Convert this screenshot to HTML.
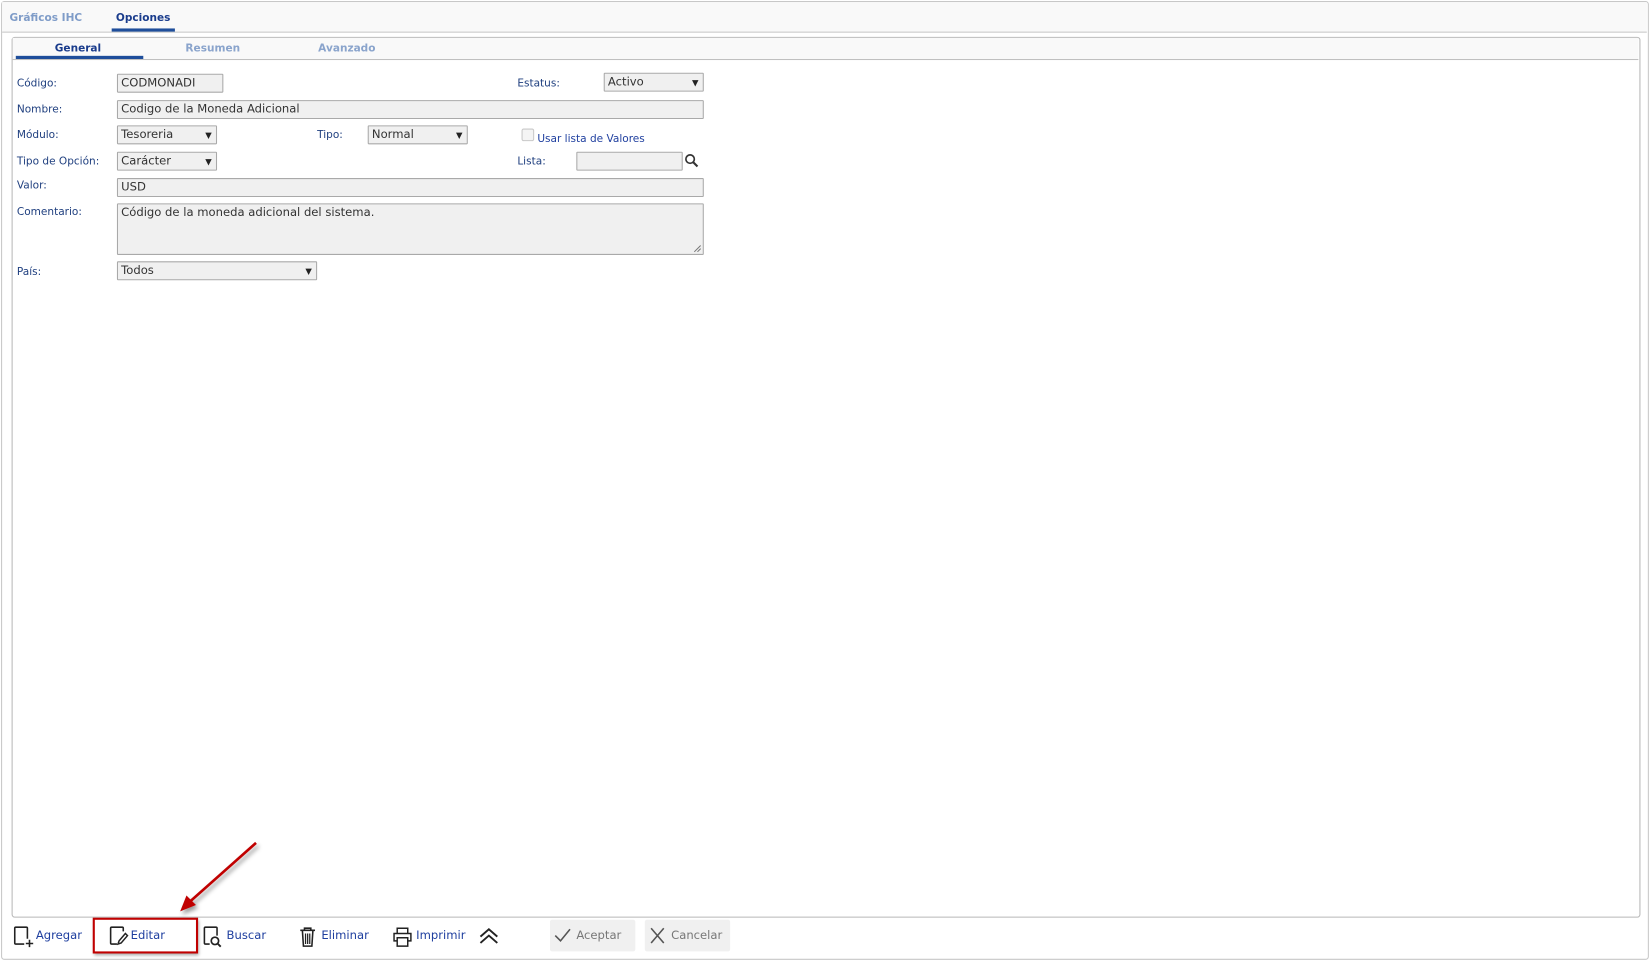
<!DOCTYPE html>
<html><head><meta charset="utf-8"><style>
html,body{margin:0;padding:0;width:1650px;height:960px;overflow:hidden;background:#fff;}
#w{position:absolute;left:0;top:0;width:1566px;height:911px;transform:scale(1.0536);transform-origin:0 0;font-family:"DejaVu Sans","Liberation Sans",sans-serif;}
.a{position:absolute;}
.lbl{position:absolute;font-size:10px;color:#1f3f7f;line-height:12px;margin-top:2px;}
.in{position:absolute;background:#f0f0f0;border:1px solid #a9a9a9;box-sizing:border-box;font-size:11px;color:#333;line-height:15px;padding-left:3px;border-radius:1px;}
.sel:after{content:"▼";position:absolute;right:4px;top:1px;font-size:8px;color:#222;}
.tb{position:absolute;font-size:11px;color:#1f3f9f;line-height:14px;top:881px;}
</style></head><body><div id="w">
<div class="a" style="left:1px;top:1px;width:1562px;height:908px;border:1px solid #c8c8c8;border-radius:3px;"></div>
<div class="a" style="left:2px;top:2px;width:1561px;height:28px;background:#f9f9f9;border-bottom:1px solid #c8c8c8;"></div>
<div class="a" style="left:9px;top:12px;font-size:10px;font-weight:bold;color:#7f9cc8;">Gráficos IHC</div>
<div class="a" style="left:110px;top:12px;font-size:10px;font-weight:bold;color:#1a3c8c;">Opciones</div>
<div class="a" style="left:106px;top:27px;width:60px;height:3px;background:#1f4e9b;"></div>

<div class="a" style="left:11px;top:35px;width:1544px;height:834px;border:1px solid #b8b8b8;border-radius:3px;"></div>
<div class="a" style="left:12px;top:36px;width:1543px;height:20px;background:#f9f9f9;border-bottom:1px solid #c0c0c0;"></div>
<div class="a" style="left:52px;top:41px;font-size:10px;font-weight:bold;color:#1a3c8c;">General</div>
<div class="a" style="left:176px;top:41px;font-size:10px;font-weight:bold;color:#8aa4cc;">Resumen</div>
<div class="a" style="left:302px;top:41px;font-size:10px;font-weight:bold;color:#8aa4cc;">Avanzado</div>
<div class="a" style="left:15px;top:53px;width:121px;height:3px;background:#1f4e9b;"></div>

<div class="lbl" style="left:16px;top:72px;">Código:</div>
<div class="in" style="left:111px;top:70px;width:101px;height:18px;">CODMONADI</div>
<div class="lbl" style="left:491px;top:72px;">Estatus:</div>
<div class="in sel" style="left:573px;top:69px;width:95px;height:18px;">Activo</div>
<div class="lbl" style="left:16px;top:97px;">Nombre:</div>
<div class="in" style="left:111px;top:95px;width:557px;height:18px;">Codigo de la Moneda Adicional</div>
<div class="lbl" style="left:16px;top:121px;">Módulo:</div>
<div class="in sel" style="left:111px;top:119px;width:95px;height:18px;">Tesoreria</div>
<div class="lbl" style="left:301px;top:121px;">Tipo:</div>
<div class="in sel" style="left:349px;top:119px;width:95px;height:18px;">Normal</div>
<div class="a" style="left:495px;top:122px;width:10px;height:10px;border:1px solid #c8c8c8;background:#f4f4f4;border-radius:2px;"></div>
<div class="lbl" style="left:510px;top:125px;color:#1f3f9f;">Usar lista de Valores</div>
<div class="lbl" style="left:16px;top:146px;">Tipo de Opción:</div>
<div class="in sel" style="left:111px;top:144px;width:95px;height:18px;">Carácter</div>
<div class="lbl" style="left:491px;top:146px;">Lista:</div>
<div class="in" style="left:547px;top:144px;width:101px;height:18px;"></div>
<svg class="a" style="left:649px;top:145px" width="16" height="16" viewBox="0 0 16 16"><circle cx="6" cy="6" r="4" fill="none" stroke="#333" stroke-width="1.6"/><path d="M9 9l4 4" stroke="#333" stroke-width="2"/></svg>
<div class="lbl" style="left:16px;top:169px;">Valor:</div>
<div class="in" style="left:111px;top:169px;width:557px;height:18px;">USD</div>
<div class="lbl" style="left:16px;top:194px;">Comentario:</div>
<div class="in" style="left:111px;top:193px;width:557px;height:49px;">Código de la moneda adicional del sistema.</div>
<svg class="a" style="left:657px;top:231px" width="9" height="9"><path d="M8 2L2 8M8 5L5 8" stroke="#777" stroke-width="1"/></svg>
<div class="lbl" style="left:16px;top:251px;">País:</div>
<div class="in sel" style="left:111px;top:248px;width:190px;height:18px;">Todos</div>

<svg class="a" style="left:11px;top:878px" width="22" height="22" viewBox="0 0 22 22"><path d="M12 18H4a1 1 0 0 1-1-1V3a1 1 0 0 1 1-1h10a1 1 0 0 1 1 1v10" fill="none" stroke="#222" stroke-width="1.5"/><path d="M17 14v7M13.5 17.5h7" stroke="#222" stroke-width="1.5"/></svg>
<div class="tb" style="left:34px;">Agregar</div>
<div class="a" style="left:88px;top:871px;width:100px;height:34px;border:2px solid #c00000;box-sizing:border-box;box-shadow:1px 2px 3px rgba(0,0,0,.35);"></div>
<svg class="a" style="left:101px;top:878px" width="22" height="22" viewBox="0 0 22 22"><path d="M10 18H5a1 1 0 0 1-1-1V3a1 1 0 0 1 1-1h10a1 1 0 0 1 1 1v3" fill="none" stroke="#222" stroke-width="1.5"/><path d="M11 18l1-3 6-7 2 2-6 7z" fill="none" stroke="#222" stroke-width="1.4"/></svg>
<div class="tb" style="left:124px;">Editar</div>
<svg class="a" style="left:191px;top:878px" width="22" height="22" viewBox="0 0 22 22"><path d="M8 18H4a1 1 0 0 1-1-1V3a1 1 0 0 1 1-1h10a1 1 0 0 1 1 1v7" fill="none" stroke="#222" stroke-width="1.5"/><circle cx="13" cy="15" r="3.5" fill="none" stroke="#222" stroke-width="1.6"/><path d="M15.5 17.5l3 3" stroke="#222" stroke-width="1.8"/></svg>
<div class="tb" style="left:215px;">Buscar</div>
<svg class="a" style="left:282px;top:878px" width="20" height="22" viewBox="0 0 20 22"><path d="M3 5h14M7 5V3h6v2M5 5l1 15h8l1-15" fill="none" stroke="#222" stroke-width="1.5"/><path d="M8 8v10M10 8v10M12 8v10" stroke="#222" stroke-width="1.2"/></svg>
<div class="tb" style="left:305px;">Eliminar</div>
<svg class="a" style="left:372px;top:878px" width="20" height="22" viewBox="0 0 20 22"><path d="M5 8V3h10v5M5 15H2V8h16v7h-3M5 12h10v8H5z" fill="none" stroke="#222" stroke-width="1.4"/></svg>
<div class="tb" style="left:395px;">Imprimir</div>
<svg class="a" style="left:454px;top:880px" width="20" height="18" viewBox="0 0 20 18"><path d="M2 9l8-7 8 7M2 15l8-7 8 7" fill="none" stroke="#222" stroke-width="1.8"/></svg>
<div class="a" style="left:522px;top:873px;width:81px;height:30px;background:#f0f0f0;border-radius:2px;"></div>
<svg class="a" style="left:525px;top:880px" width="18" height="16" viewBox="0 0 18 16"><path d="M2 8l5 5 9-11" fill="none" stroke="#555" stroke-width="1.5"/></svg>
<div class="tb" style="left:547px;color:#777;">Aceptar</div>
<div class="a" style="left:612px;top:873px;width:81px;height:30px;background:#f0f0f0;border-radius:2px;"></div>
<svg class="a" style="left:616px;top:880px" width="16" height="16" viewBox="0 0 16 16"><path d="M2 1l12 14M14 1L2 15" stroke="#555" stroke-width="1.5"/></svg>
<div class="tb" style="left:637px;color:#777;">Cancelar</div>

<svg class="a" style="left:160px;top:790px" width="100" height="90" viewBox="0 0 100 90"><defs><filter id="s"><feDropShadow dx="2" dy="3" stdDeviation="2" flood-opacity=".4"/></filter></defs><g filter="url(#s)"><path d="M83 10L20 66" stroke="#c00000" stroke-width="2.5"/><path d="M11 75l6-15 9 9z" fill="#c00000"/></g></svg>
</div></body></html>
